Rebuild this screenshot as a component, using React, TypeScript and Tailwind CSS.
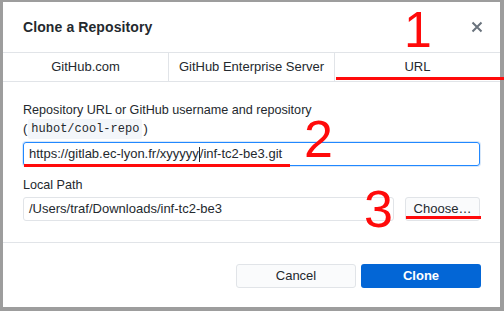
import React from 'react';

const tabs = ['GitHub.com', 'GitHub Enterprise Server', 'URL'];

const App: React.FC = () => {
  return (
    <div
      className="relative w-[504px] h-[311px] bg-[#9d9d9d] pt-[2px] pl-[3px] overflow-hidden"
      style={{ fontFamily: '"Liberation Sans", Arial, sans-serif' }}
    >
      <div className="w-[497px] h-[305px] bg-white flex flex-col text-[#24292e]">
        {/* Header */}
        <div className="h-[50px] flex items-center justify-between pl-[20px] pr-[16px]">
          <h1 className="text-[14px] font-bold tracking-[0.1px]">Clone a Repository</h1>
          <svg width="12" height="12" viewBox="0 0 12 12" className="mr-[1px]">
            <path d="M1.5 1.5 L10.5 10.5 M10.5 1.5 L1.5 10.5" stroke="#6a737d" strokeWidth="2" />
          </svg>
        </div>

        {/* Tabs */}
        <div className="h-[30px] flex border-y border-[#e1e4e8]">
          {tabs.map((tab, i) => (
            <div
              key={tab}
              className={`flex-1 flex items-center justify-center text-[13px] ${i < 2 ? 'border-r border-[#e1e4e8]' : ''}`}
            >
              {tab}
            </div>
          ))}
        </div>

        {/* Body */}
        <div className="px-[20px] pt-[19px] h-[161px] border-b border-[#e1e4e8]">
          <div className="text-[12.6px] leading-[18px]">Repository URL or GitHub username and repository</div>
          <div className="text-[13px] leading-[20px] flex items-center">
            <span>(</span>
            <span
              className="bg-[#f3f6fa] px-[3px] text-[12px] leading-[20px] mx-[1px] rounded-[2px]"
              style={{ fontFamily: '"Liberation Mono", "DejaVu Sans Mono", monospace' }}
            >
              hubot/cool-repo
            </span>
            <span>)</span>
          </div>
          <div className="mt-[3px] h-[24px] border border-[#2188ff] rounded-[3px] shadow-[0_0_0_1px_rgba(3,102,214,0.15)] flex items-center px-[5px] text-[13px]">
            <span>https://gitlab.ec-lyon.fr/xyyyyy</span>
            <span className="w-px h-[15px] bg-[#24292e]" />
            <span>/inf-tc2-be3.git</span>
          </div>

          <div className="text-[12.6px] leading-[18px] mt-[10px]">Local Path</div>
          <div className="mt-[3px] flex gap-[11px]">
            <div className="flex-1 h-[24px] border border-[#e1e4e8] rounded-[3px] flex items-center px-[5px] text-[13px]">
              /Users/traf/Downloads/inf-tc2-be3
            </div>
            <button className="w-[75px] h-[24px] border border-[#e1e4e8] rounded-[3px] bg-[#fafbfc] text-[13px]">
              Choose…
            </button>
          </div>
        </div>

        {/* Footer */}
        <div className="flex-1 flex justify-end items-start pt-[21px] pr-[19px] gap-[5px]">
          <button className="w-[120px] h-[24px] border border-[#e1e4e8] rounded-[3px] bg-[#fafbfc] text-[13px]">
            Cancel
          </button>
          <button className="w-[120px] h-[24px] rounded-[3px] bg-[#0366d6] text-white text-[13px] font-bold">
            Clone
          </button>
        </div>
      </div>

      {/* Annotations */}
      <span className="absolute left-[404px] top-[2px] text-[50px] leading-[56px] text-[#ff0a0a]">1</span>
      <div className="absolute left-[336px] top-[77px] w-[168px] h-[3px] bg-[#ff0a0a]" />
      <span className="absolute left-[304px] top-[110px] text-[52px] leading-[58px] text-[#ff0a0a]">2</span>
      <div className="absolute left-[24px] top-[164px] w-[266px] h-[3px] bg-[#ff0a0a]" />
      <span className="absolute left-[364px] top-[180px] text-[52px] leading-[58px] text-[#ff0a0a]">3</span>
      <div className="absolute left-[406px] top-[216px] w-[75px] h-[3px] bg-[#ff0a0a]" />
    </div>
  );
};

export default App;
